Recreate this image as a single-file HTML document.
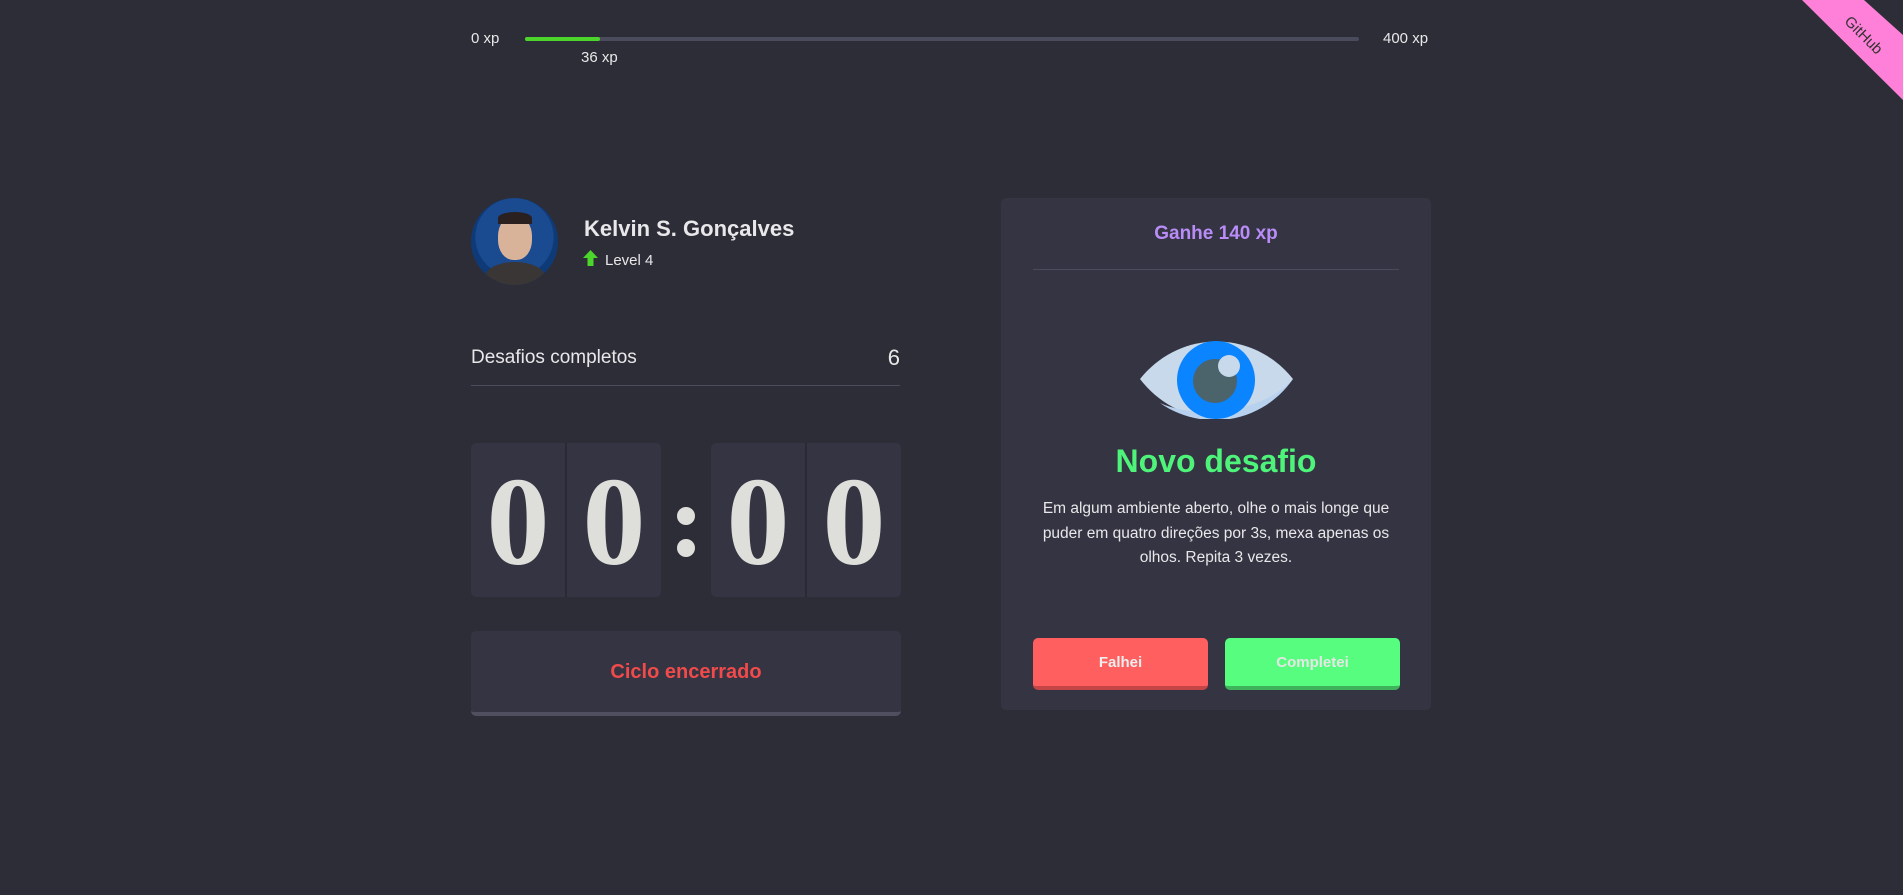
<!DOCTYPE html>
<html><head><meta charset="utf-8"><style>
*{margin:0;padding:0;box-sizing:border-box}
body{width:1903px;height:895px;background:#2d2d37;font-family:"Liberation Sans",Arial,sans-serif;color:#e8e8ea;position:relative;overflow:hidden}
.a{position:absolute}
</style></head><body>
<!-- xp bar -->
<div class="a" style="left:471px;top:30px;font-size:15px">0 xp</div>
<div class="a" style="left:525px;top:37px;width:834px;height:4px;border-radius:2px;background:#4b4b5e"></div>
<div class="a" style="left:525px;top:37px;width:75px;height:4px;border-radius:2px;background:#4cd62b"></div>
<div class="a" style="left:581px;top:49px;font-size:15px">36 xp</div>
<div class="a" style="left:1383px;top:30px;font-size:15px">400 xp</div>
<!-- ribbon -->
<div class="a" style="left:1780px;top:0;width:123px;height:110px;background:#ff80d9;clip-path:polygon(22px 0,84px 0,123px 35px,123px 100px)"></div>
<div class="a" style="left:1840px;top:27px;font-size:15px;color:#333;transform:rotate(45deg)">GitHub</div>
<!-- profile -->
<div class="a" style="left:471px;top:198px;width:87px;height:87px;border-radius:50%;background:radial-gradient(circle at 50% 45%,#d9b8a2 0 18%,#1a4a8f 19% 60%,#0e3a78 61%);overflow:hidden">
<div class="a" style="left:14px;top:64px;width:60px;height:30px;border-radius:50% 50% 0 0;background:#3a3636"></div>
<div class="a" style="left:27px;top:18px;width:34px;height:44px;border-radius:45%;background:#d8b39a"></div>
<div class="a" style="left:27px;top:14px;width:34px;height:12px;border-radius:50% 50% 0 0;background:#2a2020"></div>
</div>
<div class="a" style="left:584px;top:216px;font-size:22px;font-weight:bold">Kelvin S. Gonçalves</div>
<svg class="a" style="left:583px;top:250px" width="15" height="16" viewBox="0 0 15 16"><path d="M7.5 0L15 8H10.5V16H4.5V8H0Z" fill="#4cd62b"/></svg>
<div class="a" style="left:605px;top:252px;font-size:15px">Level 4</div>
<div class="a" style="left:471px;top:347px;font-size:19px">Desafios completos</div>
<div class="a" style="left:880px;top:345px;width:20px;text-align:right;font-size:22px">6</div>
<div class="a" style="left:471px;top:385px;width:429px;height:1px;background:#4b4b5e"></div>
<!-- timer -->
<div class="a" style="left:471px;top:443px;width:190px;height:154px;border-radius:5px;background:#343442;display:flex">
<div style="flex:1;border-right:1px solid #2a2a34;font:bold 126px 'Liberation Serif',serif;color:#dededa;text-align:center;line-height:160px">0</div><div style="flex:1;border-left:1px solid #2a2a34;font:bold 126px 'Liberation Serif',serif;color:#dededa;text-align:center;line-height:160px">0</div></div>
<div class="a" style="left:677px;top:507px;width:18px;height:18px;border-radius:50%;background:#dededa"></div>
<div class="a" style="left:677px;top:539px;width:18px;height:18px;border-radius:50%;background:#dededa"></div>
<div class="a" style="left:711px;top:443px;width:190px;height:154px;border-radius:5px;background:#343442;display:flex">
<div style="flex:1;border-right:1px solid #2a2a34;font:bold 126px 'Liberation Serif',serif;color:#dededa;text-align:center;line-height:160px">0</div><div style="flex:1;border-left:1px solid #2a2a34;font:bold 126px 'Liberation Serif',serif;color:#dededa;text-align:center;line-height:160px">0</div></div>
<div class="a" style="left:471px;top:631px;width:430px;height:85px;border-radius:5px;background:#343442;border-bottom:4px solid #4f4f60;text-align:center;line-height:83px;font-size:20px;font-weight:bold;color:#f04a4a">Ciclo encerrado</div>
<!-- challenge card -->
<div class="a" style="left:1001px;top:198px;width:430px;height:512px;border-radius:5px;background:#343442;text-align:center">
<div style="margin-top:25px;font-size:19px;font-weight:bold;color:#b98cf7">Ganhe 140 xp</div>
<div style="margin:24px auto 0;width:366px;height:1px;background:#4b4b5e"></div>
<svg style="display:block;margin:71px auto 0" width="153" height="78" viewBox="0 0 153 78"><path d="M0 38C40 -12 113 -12 153 38C113 90 40 90 0 38Z" fill="#c8d9ec"/><path d="M153 38C125 70 60 80 20 62C60 90 120 85 153 38Z" fill="#b8d1ee"/><circle cx="76" cy="39" r="39" fill="#0a84ff"/><path d="M76 0A39 39 0 0 1 76 78A36 36 0 0 0 76 0Z" fill="#0a74f2"/><circle cx="75" cy="40" r="22" fill="#4b636a"/><circle cx="89" cy="25" r="11" fill="#c8d9ec"/></svg>
<div style="margin-top:24px;font-size:32px;font-weight:bold;color:#4ef37a">Novo desafio</div>
<div style="margin:17px auto 0;width:370px;font-size:15.5px;line-height:24.5px">Em algum ambiente aberto, olhe o mais longe que puder em quatro direções por 3s, mexa apenas os olhos. Repita 3 vezes.</div>
</div>
<div class="a" style="left:1033px;top:638px;width:175px;height:52px;border-radius:5px;background:#ff5f5f;border-bottom:4px solid #c44545;text-align:center;line-height:50px;font-size:15px;font-weight:bold;color:#eee">Falhei</div>
<div class="a" style="left:1225px;top:638px;width:175px;height:52px;border-radius:5px;background:#57fd7f;border-bottom:4px solid #3fb35c;text-align:center;line-height:50px;font-size:15px;font-weight:bold;color:#e6e6e6">Completei</div>
</body></html>
